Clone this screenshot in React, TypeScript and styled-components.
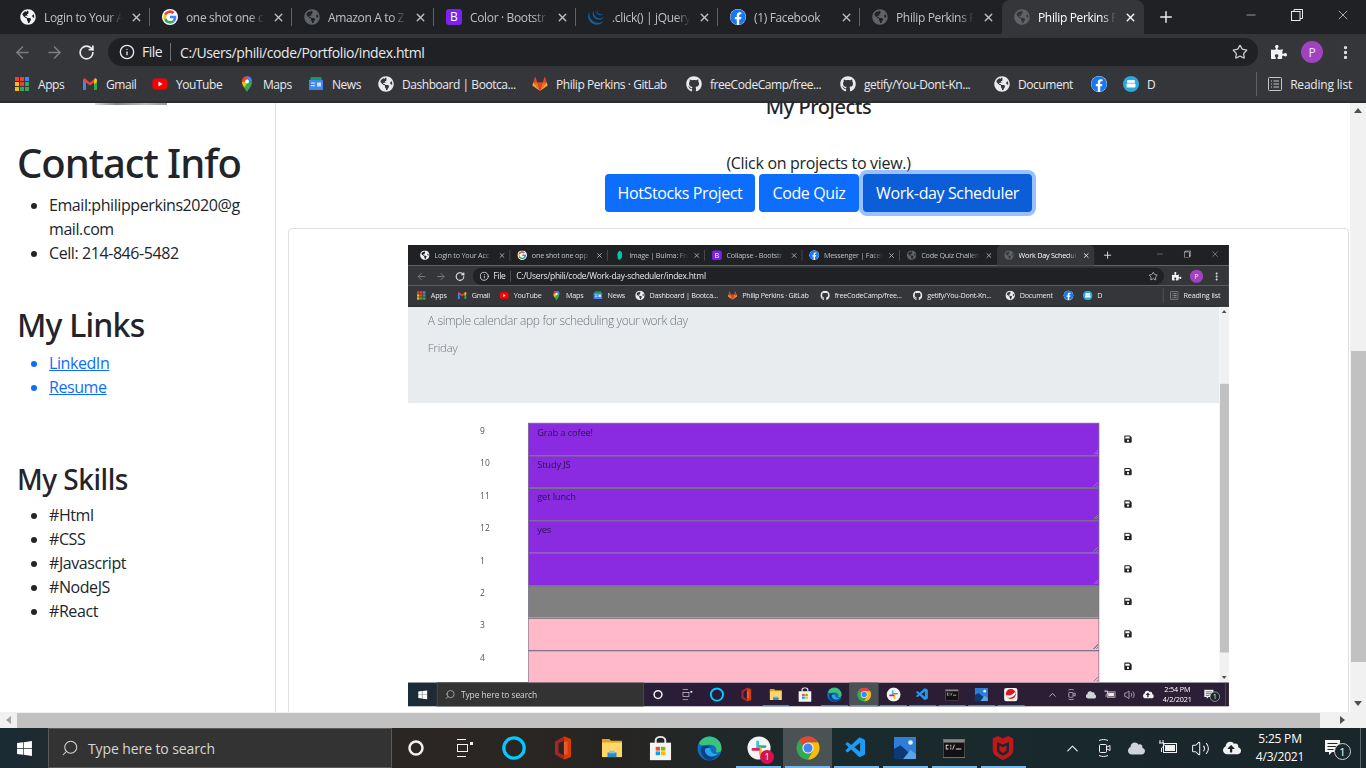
import React from "react";
import styled, { createGlobalStyle } from "styled-components";
import { ArrowLeft, ArrowRight, RotateCw, Info, Star, MoreVertical, Plus, X, Minus, Search, ChevronUp, Volume2 } from "lucide-react";
import { FaGlobeAmericas, FaPuzzlePiece, FaWindows, FaGithub, FaFacebook, FaSave, FaCloud, FaCloudUploadAlt } from "react-icons/fa";
import { SiJquery } from "react-icons/si";
import { VscVscode } from "react-icons/vsc";

const UI = `"Open Sans", "Noto Sans", "Liberation Sans", sans-serif`;
const HEAD = `"Noto Sans", "Open Sans", "Liberation Sans", sans-serif`;

const Global = createGlobalStyle`
  html, body { margin: 0; padding: 0; background: #fff; overflow: hidden; }
  * { box-sizing: border-box; }
`;

const Screen = styled.div`
  width: 1366px;
  height: 768px;
  display: flex;
  flex-direction: column;
  overflow: hidden;
  background: #fff;
  font-family: ${UI};
  color: #212529;
`;

/* ---------- browser chrome ---------- */
const TabStrip = styled.div`
  height: 34px;
  background: #202124;
  display: flex;
  padding-left: 8px;
  flex: none;
`;
const TabBox = styled.div<{ $w: number; $active?: boolean; $sep?: boolean }>`
  width: ${p => p.$w}px;
  height: 34px;
  display: flex;
  align-items: center;
  gap: 8px;
  padding: 0 7px 0 12px;
  position: relative;
  border-radius: 8px 8px 0 0;
  background: ${p => (p.$active ? "#35363a" : "transparent")};
  color: ${p => (p.$active ? "#fff" : "#bdc1c6")};
  &::after {
    content: "";
    display: ${p => (p.$sep ? "block" : "none")};
    position: absolute;
    right: 0;
    top: 8px;
    width: 1px;
    height: 18px;
    background: #5f6368;
  }
`;
const TabTitle = styled.span`
  flex: 1;
  min-width: 0;
  overflow: hidden;
  white-space: nowrap;
  font-size: 12px;
  letter-spacing: -0.35px;
  -webkit-mask-image: linear-gradient(90deg, #000 82%, transparent 100%);
  mask-image: linear-gradient(90deg, #000 82%, transparent 100%);
`;
const NewTab = styled.div`
  width: 44px;
  height: 34px;
  display: flex;
  align-items: center;
  justify-content: center;
  color: #e8eaed;
`;
const WinControls = styled.div`
  margin-left: auto;
  display: flex;
  color: #e8eaed;
`;
const WinBtn = styled.div`
  width: 46px;
  height: 30px;
  display: flex;
  align-items: center;
  justify-content: center;
`;
const Toolbar = styled.div`
  height: 33px;
  background: #35363a;
  display: flex;
  align-items: center;
  flex: none;
  padding: 3px 0 0 6px;
  color: #e8eaed;
`;
const NavBtn = styled.div<{ $dim?: boolean }>`
  width: 32px;
  display: flex;
  justify-content: center;
  color: ${p => (p.$dim ? "#7b7d81" : "#e8eaed")};
`;
const UrlPill = styled.div`
  margin-left: 6px;
  width: 1150px;
  height: 28px;
  border-radius: 14px;
  background: #202124;
  display: flex;
  align-items: center;
  padding: 0 10px 0 11px;
  font-size: 14px;
  letter-spacing: -0.4px;
`;
const FileLabel = styled.span`
  margin-left: 7px;
  width: 29px;
  border-right: 1px solid #6b6e72;
  line-height: 18px;
  font-size: 14px;
  letter-spacing: -0.5px;
`;
const UrlText = styled.span`
  margin-left: 9px;
  flex: 1;
  white-space: nowrap;
`;
const ToolRight = styled.div`
  display: flex;
  align-items: center;
  margin-left: 13px;
  gap: 14px;
`;
const Avatar = styled.div`
  width: 22px;
  height: 22px;
  border-radius: 50%;
  background: #a142c0;
  color: #f3e5f5;
  font-size: 12px;
  display: flex;
  align-items: center;
  justify-content: center;
`;
const BookmarkBar = styled.div`
  height: 36px;
  background: #35363a;
  border-bottom: 2px solid #2b2c2f;
  display: flex;
  align-items: center;
  padding: 0 14px;
  flex: none;
  color: #e8eaed;
  font-size: 12px;
  letter-spacing: -0.45px;
`;
const Mark = styled.div<{ $gap?: number }>`
  display: flex;
  align-items: center;
  gap: 8px;
  margin-right: ${p => p.$gap ?? 17}px;
`;
const MarkLabel = styled.span<{ $w: number }>`
  width: ${p => p.$w}px;
  white-space: nowrap;
`;
const ReadingList = styled.div`
  margin-left: auto;
  height: 24px;
  border-left: 1px solid #5f6368;
  padding-left: 11px;
  display: flex;
  align-items: center;
  gap: 8px;
  letter-spacing: -0.2px;
`;

/* ---------- page frame ---------- */
const PageFrame = styled.div`
  flex: 1;
  min-height: 0;
  display: flex;
  flex-direction: column;
`;
const PageRow = styled.div`
  flex: 1;
  min-height: 0;
  display: flex;
`;
const PageBody = styled.div`
  flex: 1;
  min-width: 0;
  overflow: hidden;
`;
const VBar = styled.div`
  width: 16px;
  flex: none;
  background: #f1f1f1;
  display: flex;
  flex-direction: column;
  align-items: center;
  padding-top: 5px;
`;
const VThumb = styled.div<{ $top: number; $h: number }>`
  width: 15px;
  margin-top: ${p => p.$top}px;
  height: ${p => p.$h}px;
  background: #c1c1c1;
`;
const Arrow = styled.div<{ $dir: "up" | "down" | "left" | "right" }>`
  width: 0;
  height: 0;
  flex: none;
  border: 4px solid transparent;
  ${p => (p.$dir === "up" ? "border-bottom: 5px solid #505050; border-top: 0;" : "")}
  ${p => (p.$dir === "down" ? "border-top: 5px solid #505050; border-bottom: 0;" : "")}
  ${p => (p.$dir === "left" ? "border-right: 5px solid #a3a3a3; border-left: 0;" : "")}
  ${p => (p.$dir === "right" ? "border-left: 5px solid #505050; border-right: 0;" : "")}
`;
const DownWrap = styled.div`
  margin-top: auto;
  padding-bottom: 6px;
`;
const HBar = styled.div`
  height: 16px;
  flex: none;
  background: #f1f1f1;
  display: flex;
  align-items: center;
  padding: 0 21px 0 6px;
`;
const HThumb = styled.div`
  height: 15px;
  width: 1303px;
  margin-left: 6px;
  background: #c1c1c1;
`;
const HEnd = styled.div`
  margin-left: auto;
`;

/* ---------- taskbar ---------- */
const TaskBar = styled.div<{ $bg: string }>`
  height: 40px;
  flex: none;
  display: flex;
  align-items: stretch;
  background: ${p => p.$bg};
  color: #fff;
`;
const Start = styled.div`
  width: 48px;
  display: flex;
  align-items: center;
  justify-content: center;
`;
const SearchBox = styled.div`
  width: 344px;
  background: #333;
  border: 1px solid #5a5a5a;
  display: flex;
  align-items: center;
  padding-left: 12px;
  gap: 9px;
  font-size: 14px;
  letter-spacing: -0.1px;
  color: #d6d6d6;
`;
const TaskCell = styled.div<{ $on?: boolean; $active?: boolean }>`
  width: 48.9px;
  display: flex;
  align-items: center;
  justify-content: center;
  position: relative;
  background: ${p => (p.$active ? "#4a5254" : "transparent")};
  &::after {
    content: "";
    display: ${p => (p.$on ? "block" : "none")};
    position: absolute;
    left: 2px;
    right: 2px;
    bottom: 0;
    height: 2px;
    background: #76b9ed;
  }
`;
const Badge = styled.span`
  position: absolute;
  right: 9px;
  bottom: 4px;
  width: 14px;
  height: 14px;
  border-radius: 50%;
  background: #d5124f;
  color: #fff;
  font-size: 9px;
  line-height: 14px;
  text-align: center;
`;
const Tray = styled.div`
  margin-left: auto;
  display: flex;
  align-items: stretch;
`;
const TrayCell = styled.div`
  width: 32px;
  display: flex;
  align-items: center;
  justify-content: center;
  color: #f0f0f0;
`;
const Clock = styled.div`
  width: 64px;
  display: flex;
  flex-direction: column;
  justify-content: center;
  align-items: center;
  font-size: 12px;
  letter-spacing: -0.2px;
  line-height: 18px;
`;
const Notify = styled.div`
  width: 48px;
  padding-left: 12px;
  display: flex;
  align-items: center;
  position: relative;
`;
const NotifyCount = styled.span`
  position: absolute;
  left: 22px;
  top: 15px;
  width: 17px;
  height: 17px;
  border-radius: 50%;
  border: 1px solid #d0d0d0;
  background: #1b282c;
  font-size: 11px;
  line-height: 15px;
  text-align: center;
`;
const ShowDesktop = styled.div`
  width: 6px;
  border-left: 1px solid #5b666a;
`;

/* ---------- portfolio page ---------- */
const Portfolio = styled.div`
  display: flex;
  height: 100%;
`;
const Side = styled.aside`
  width: 276px;
  flex: none;
  border-right: 1px solid #dee2e6;
  padding-left: 17px;
  font-size: 16px;
  line-height: 24px;
`;
const Sliver = styled.div`
  width: 72px;
  height: 2px;
  margin-left: 78px;
  background: linear-gradient(90deg, #ddd, #888 30%, #bbb 70%, #999);
`;
const H1 = styled.h1`
  margin: 34px 0 0;
  font-family: ${HEAD};
  font-size: 40px;
  line-height: 48px;
  font-weight: 500;
  letter-spacing: -1.05px;
`;
const H2 = styled.h2`
  margin: 41px 0 0;
  font-family: ${HEAD};
  font-size: 32px;
  line-height: 38px;
  font-weight: 500;
  letter-spacing: -0.8px;
`;
const H3 = styled.h3`
  margin: 63px 0 0;
  font-family: ${HEAD};
  font-size: 28px;
  line-height: 34px;
  font-weight: 500;
  letter-spacing: -0.47px;
`;
const List = styled.ul<{ $top: number }>`
  margin: ${p => p.$top}px 0 0;
  padding-left: 32px;
  letter-spacing: -0.42px;
`;
const LinkItem = styled.li`
  color: #0d6efd;
`;
const A = styled.a`
  color: #0d6efd;
  text-decoration: underline;
`;
const Main = styled.main`
  flex: 1;
  min-width: 0;
  padding: 0 1px 0 12px;
  font-size: 16px;
  line-height: 24px;
  text-align: center;
`;
const H5 = styled.h5`
  margin: -8px 0 0;
  font-family: ${HEAD};
  font-size: 20px;
  line-height: 24px;
  font-weight: 500;
  letter-spacing: -0.45px;
`;
const Hint = styled.p`
  margin: 32px 0 0;
  letter-spacing: -0.3px;
`;
const BtnRow = styled.div`
  display: flex;
  justify-content: center;
  gap: 4px;
  margin-top: -1px;
`;
const Btn = styled.button<{ $w: number; $focus?: boolean }>`
  width: ${p => p.$w}px;
  height: 38px;
  border: 0;
  border-radius: 4px;
  padding: 0;
  background: ${p => (p.$focus ? "#0b5ed7" : "#0d6efd")};
  box-shadow: ${p => (p.$focus ? "0 0 0 4px rgba(49,132,253,.5)" : "none")};
  color: #fff;
  font: 16px/24px ${UI};
  letter-spacing: -0.38px;
`;
const Card = styled.div`
  margin-top: 16px;
  border: 1px solid rgba(0, 0, 0, 0.125);
  border-radius: 4px;
  padding: 16px 0 40px;
  display: flex;
  justify-content: center;
`;
const Shot = styled.div`
  width: 821px;
  height: 462px;
  overflow: hidden;
  flex: none;
  filter: blur(0.35px);
  text-align: left;
`;
const ShotScale = styled.div`
  width: 1366px;
  height: 768px;
  transform: scale(0.601);
  transform-origin: 0 0;
`;

/* ---------- scheduler page inside the picture ---------- */
const Jumbo = styled.div`
  height: 160px;
  background: #e9ecef;
  padding: 8px 33px 0;
  color: #6f767c;
  font-size: 20px;
  font-weight: 300;
  letter-spacing: -0.3px;
`;
const Lead = styled.p`
  margin: 0;
  line-height: 30px;
  letter-spacing: -0.6px;
`;
const Day = styled.p`
  margin: 16px 0 0;
  font-size: 19px;
  line-height: 28px;
`;
const Rows = styled.div`
  padding-top: 33px;
`;
const Row = styled.div`
  display: flex;
  height: 54px;
`;
const Hour = styled.div`
  width: 200px;
  padding: 1px 0 0 120px;
  font-size: 14px;
  line-height: 24px;
  color: #555;
`;
const Slot = styled.div<{ $bg: string }>`
  width: 950px;
  background: ${p => p.$bg};
  border: 1px solid #77707f;
  border-top-width: 2px;
  border-bottom: 0;
  padding: 1px 14px 0;
  font-size: 15.5px;
  line-height: 24px;
  letter-spacing: -0.25px;
  color: #2a1745;
  position: relative;
  &::after {
    content: "";
    position: absolute;
    right: 1px;
    bottom: 2px;
    width: 9px;
    height: 9px;
    background: linear-gradient(135deg, transparent 55%, #8c7fa0 55%, #8c7fa0 65%, transparent 65%, transparent 80%, #8c7fa0 80%, #8c7fa0 90%, transparent 90%);
  }
`;
const SaveCell = styled.div`
  width: 96px;
  display: flex;
  align-items: center;
  justify-content: center;
  color: #212529;
`;

/* ---------- icons ---------- */
const TileB = styled.span`
  width: 16px;
  height: 16px;
  border-radius: 3px;
  background: #7b22ee;
  color: #fff;
  font-size: 12px;
  font-weight: 500;
  line-height: 16px;
  text-align: center;
  flex: none;
  letter-spacing: 0;
`;
const FbDisc = styled.span`
  width: 16px;
  height: 16px;
  border-radius: 50%;
  background: #fff;
  display: flex;
  flex: none;
  color: #1877f2;
`;

const Google = () => (
  <svg width="16" height="16" viewBox="0 0 48 48">
    <circle cx="24" cy="24" r="24" fill="#fff" />
    <path fill="#ea4335" d="M24 12c3 0 5.600 1 7.700 3l5.700-5.700A20 20 0 0 0 6.200 14.900l6.700 5.200C14.400 15.400 18.800 12 24 12z" />
    <path fill="#4285f4" d="M43 24.400c0-1.400-.1-2.500-.4-3.900H24v7.600h10.800c-.5 2.500-1.900 4.700-4.200 6.200l6.500 5C40.900 35.800 43 30.600 43 24.400z" />
    <path fill="#fbbc05" d="M12.900 28.100a11.800 11.800 0 0 1 0-8l-6.700-5.200a20 20 0 0 0 0 18.200z" />
    <path fill="#34a853" d="M24 44c5.400 0 9.900-1.800 13.100-4.700l-6.500-5c-1.800 1.200-4 2-6.600 2-5.200 0-9.600-3.500-11.100-8.200l-6.700 5.200A20 20 0 0 0 24 44z" />
  </svg>
);
const Gmail = () => (
  <svg width="16" height="16" viewBox="0 0 16 16">
    <path fill="#4285f4" d="M1 3.500h3V14H2a1 1 0 0 1-1-1z" />
    <path fill="#34a853" d="M12 3.500h3V13a1 1 0 0 1-1 1h-2z" />
    <path fill="#ea4335" d="M1 3.500 2.500 2 8 6.500 13.500 2 15 3.500 12 6.500 8 9.500 4 6.500z" />
    <path fill="#fbbc05" d="M12 3.800 13.500 2 15 3.500V6l-3 2.500z" />
  </svg>
);
const YouTube = () => (
  <svg width="16" height="16" viewBox="0 0 16 16">
    <rect x="0.500" y="2.500" width="15" height="11" rx="3" fill="#f00" />
    <path d="M6.500 5.500v5l4-2.500z" fill="#fff" />
  </svg>
);
const Maps = () => (
  <svg width="16" height="16" viewBox="0 0 16 16">
    <path fill="#34a853" d="M8 16C6 12.500 3 10 3 5.500h10C13 10 10 12.500 8 16z" />
    <path fill="#fbbc05" d="M3 5.500C3 8 4.500 10 5.500 11.500l3-6z" />
    <path fill="#4285f4" d="M8 0a5 5 0 0 1 5 5.500H8z" />
    <path fill="#ea4335" d="M8 0a5 5 0 0 0-5 5.500h5z" />
    <circle cx="8" cy="5.500" r="2" fill="#fff" />
  </svg>
);
const News = () => (
  <svg width="16" height="16" viewBox="0 0 16 16">
    <path fill="#0f9d58" d="M3 1h10l1 3H2z" />
    <path fill="#f4b400" d="M1 4h5v3H1z" />
    <rect x="1" y="4" width="14" height="10" rx="1" fill="#4285f4" />
    <rect x="3" y="6.500" width="4" height="1.200" fill="#d2e3fc" />
    <rect x="3" y="9" width="4" height="1.200" fill="#d2e3fc" />
    <rect x="9" y="6.500" width="4" height="4" fill="#d2e3fc" />
  </svg>
);
const GitLab = () => (
  <svg width="16" height="16" viewBox="0 0 16 16">
    <path fill="#e24329" d="M8 15 5.200 6.300h5.600z" />
    <path fill="#fc6d26" d="M8 15 5.200 6.300H1.300zM8 15l2.800-8.700h3.900z" />
    <path fill="#fca326" d="M1.300 6.300.4 9.100c-.1.300 0 .5.200.7L8 15zM14.700 6.300l.9 2.800c.1.300 0 .5-.2.7L8 15z" />
    <path fill="#e24329" d="M1.300 6.300h3.900L3.500 1.100c-.1-.2-.4-.2-.5 0zM14.700 6.300h-3.900l1.700-5.200c.1-.2.400-.2.5 0z" />
  </svg>
);
const AppsGrid = () => (
  <svg width="16" height="16" viewBox="0 0 16 16">
    {[
      "#ea4335", "#ea4335", "#4285f4",
      "#fbbc05", "#ea4335", "#34a853",
      "#fbbc05", "#34a853", "#34a853",
    ].map((c, i) => (
      <rect key={i} x={1 + (i % 3) * 5} y={1 + Math.floor(i / 3) * 5} width="4" height="4" fill={c} />
    ))}
  </svg>
);
const DIcon = () => (
  <svg width="16" height="16" viewBox="0 0 16 16">
    <circle cx="8" cy="8" r="8" fill="#29a9e0" />
    <rect x="4" y="4" width="8" height="3" rx="1" fill="#e8f7fd" />
    <rect x="3.500" y="7.500" width="9" height="4" rx="1" fill="#fff" />
  </svg>
);
const ReadIcon = () => (
  <svg width="14" height="14" viewBox="0 0 14 14" fill="none" stroke="#c4c7c9">
    <rect x="0.500" y="0.500" width="13" height="13" rx="1" />
    <path d="M3 4h1M3 7h1M3 10h1M5.500 4H11M5.500 7H11M5.500 10H11" />
  </svg>
);
const Restore = () => (
  <svg width="12" height="12" viewBox="0 0 12 12" fill="none" stroke="#e8eaed">
    <rect x="0.500" y="2.500" width="8.500" height="9" />
    <path d="M3 2.500V.5h8.500v9H9" />
  </svg>
);
const Alexa = () => (
  <svg width="24" height="24" viewBox="0 0 24 24">
    <circle cx="12" cy="12" r="10.200" fill="none" stroke="#00caff" strokeWidth="3.200" />
  </svg>
);
const Office = () => (
  <svg width="18" height="24" viewBox="0 0 20 26">
    <path fill="#d83b01" d="M11 0l8 3v20l-8 3z" />
    <path fill="#a4262c" d="M1 6l10-6v5L5 8v10l6 3v5L1 20z" />
    <path fill="#eb5a2f" d="M11 6h4v14h-4z" />
  </svg>
);
const Folder = () => (
  <svg width="22" height="20" viewBox="0 0 24 22">
    <path fill="#e0a526" d="M1 1h8l2 2h12v4H1z" />
    <path fill="#ffd766" d="M1 5h22v16H1z" />
    <path fill="#2f88c9" d="M7 16h10v5H7z" />
    <path fill="#7fc4ee" d="M9 14h6v3H9z" />
  </svg>
);
const Store = () => (
  <svg width="23" height="25" viewBox="0 0 24 30" preserveAspectRatio="none">
    <path d="M7 9V5a5 4 0 0 1 10 0v4" fill="none" stroke="#ececec" strokeWidth="2" />
    <path fill="#f4f4f4" d="M1 8h22v21H1z" />
    <rect x="7" y="13" width="4.500" height="4.500" fill="#f25022" />
    <rect x="12.500" y="13" width="4.500" height="4.500" fill="#7fba00" />
    <rect x="7" y="18.500" width="4.500" height="4.500" fill="#00a4ef" />
    <rect x="12.500" y="18.500" width="4.500" height="4.500" fill="#ffb900" />
  </svg>
);
const Edge = () => (
  <svg width="25" height="25" viewBox="0 0 26 26">
    <circle cx="13" cy="13" r="12.500" fill="#0c6fc0" />
    <path fill="#39c47c" d="M13 .5A12.500 12.500 0 0 1 25.500 13c0 3-3 5-6 4 2-3 0-8-6-8-5 0-9 2-11.500-1A12.500 12.500 0 0 1 13 .5z" />
    <path fill="#0a3f8a" d="M4 12c3-3 10-3 10 1 0 4 4 7 9 5-2 4-6 7-10 7-6 0-10-7-9-13z" />
    <path fill="#28a7e7" d="M9 13c2-1 5-1 5 0 0 4 4 7 9 5-3 3-7 4-10 3-4-2-6-6-4-8z" />
  </svg>
);
const Slack = () => (
  <svg width="24" height="24" viewBox="0 0 26 26">
    <circle cx="13" cy="13" r="12.500" fill="#f4f4f4" />
    <rect x="10" y="5" width="3" height="9" rx="1.500" fill="#36c5f0" />
    <rect x="12" y="10" width="9" height="3" rx="1.500" fill="#2eb67d" />
    <rect x="13" y="12" width="3" height="9" rx="1.500" fill="#ecb22e" />
    <rect x="5" y="13" width="9" height="3" rx="1.500" fill="#e01e5a" />
  </svg>
);
const ChromeLogo = () => (
  <svg width="24" height="24" viewBox="0 0 24 24">
    <circle cx="12" cy="12" r="11.500" fill="#34a853" />
    <path fill="#fbbc05" d="M12 23.500A11.500 11.500 0 0 0 22 6.300H12l5 8.700z" />
    <path fill="#ea4335" d="M12 .5a11.500 11.500 0 0 1 10 5.800H12a5.700 5.700 0 0 0-5 3L3 4.300A11.500 11.500 0 0 1 12 .5z" />
    <circle cx="12" cy="12" r="5.600" fill="#f2f2f2" />
    <circle cx="12" cy="12" r="4.500" fill="#4285f4" />
  </svg>
);
const Photos = () => (
  <svg width="22" height="22" viewBox="0 0 24 24">
    <rect width="24" height="24" fill="#2f7fd6" />
    <path fill="#0a3a78" d="M0 24V13l7-4 9 8 8 3v4z" />
    <path fill="#5aa4ea" d="M10 24l8-10 6 5v5z" />
    <circle cx="18" cy="6" r="2.500" fill="#e6f3ff" />
  </svg>
);
const Cmd = () => (
  <svg width="22" height="19" viewBox="0 0 24 20">
    <rect width="24" height="20" fill="#111" stroke="#888" />
    <rect x="0.500" y="0.500" width="23" height="3" fill="#888" />
    <path d="M3 6h3v1H4v3h2v1H3zM8 6h1v2H8zM8 9h1v2H8zM10 11l2-5h1l-2 5zM14 10h6v1.200h-6z" fill="#ddd" />
  </svg>
);
const McAfee = () => (
  <svg width="22" height="24" viewBox="0 0 24 28">
    <path fill="#c01818" d="M0 3l6-3 6 3 6-3 6 3v14c0 5-7 9-12 11C7 26 0 22 0 17z" />
    <path fill="#1b282c" d="M5 7l7 3 7-3v10c0 2-4 5-7 6-3-1-7-4-7-6z" />
    <path fill="#c01818" d="M8 11l4 2 4-2v6l-4 3-4-3z" />
  </svg>
);
const Trend = () => (
  <svg width="24" height="24" viewBox="0 0 26 26">
    <rect x="1" y="1" width="24" height="24" rx="4" fill="#f3f3f3" />
    <circle cx="13" cy="12" r="9" fill="#d71920" />
    <path d="M5 14c6 2 12-1 15-5l2 1c-2 6-10 11-17 8z" fill="#fff" />
  </svg>
);
const Meet = () => (
  <svg width="16" height="20" viewBox="0 0 16 20" fill="none" stroke="#f0f0f0">
    <rect x="3.500" y="6.500" width="7" height="8" rx="1" />
    <path d="M11 9l3-1.500v5L11 11M3 2.500c3-1.300 6-1.300 9 0M3 17.500c3 1.300 6 1.300 9 0" />
  </svg>
);
const Battery = () => (
  <svg width="20" height="18" viewBox="0 0 20 18" fill="none" stroke="#f0f0f0">
    <rect x="5.500" y="4.500" width="13" height="9" />
    <rect x="7.500" y="6.500" width="9" height="5" fill="#f0f0f0" />
    <path d="M2 1v3M5 1v3M1 4h5v3L3.500 9V13" />
  </svg>
);
const NotifyIcon = () => (
  <svg width="18" height="18" viewBox="0 0 18 18">
    <path fill="#f5f5f5" d="M1 1h15v12H8l-3 3v-3H1z" />
    <path stroke="#1b282c" d="M3.500 4.500h10M3.500 7.500h10M3.500 10.500h6" />
  </svg>
);
const Sprout = () => (
  <svg width="16" height="16" viewBox="0 0 16 16">
    <path fill="#00c4a7" d="M8 0c4 2 5 5 4 8 1 3-1 6-5 8-2-2-3-4-2-6-2-3 0-7 3-10z" />
  </svg>
);

type Fav = "globe" | "greyGlobe" | "google" | "boot" | "jquery" | "fb" | "sprout";
const FavIcon = ({ kind }: { kind: Fav }) => {
  switch (kind) {
    case "globe": return <FaGlobeAmericas size={16} color="#f1f3f4" />;
    case "greyGlobe": return <FaGlobeAmericas size={16} color="#5f6368" />;
    case "google": return <Google />;
    case "boot": return <TileB>B</TileB>;
    case "jquery": return <SiJquery size={16} color="#0f5f9e" />;
    case "fb": return <FbDisc><FaFacebook size={16} /></FbDisc>;
    default: return <Sprout />;
  }
};

type TabDef = { t: string; i: Fav };
const Tabs = ({ tabs, w }: { tabs: TabDef[]; w: number }) => (
  <TabStrip>
    {tabs.map((tab, n) => (
      <TabBox key={n} $w={w} $active={n === tabs.length - 1} $sep={n < tabs.length - 2}>
        <FavIcon kind={tab.i} />
        <TabTitle>{tab.t}</TabTitle>
        <X size={13} strokeWidth={2.5} />
      </TabBox>
    ))}
    <NewTab><Plus size={18} /></NewTab>
    <WinControls>
      <WinBtn><Minus size={14} strokeWidth={1} /></WinBtn>
      <WinBtn><Restore /></WinBtn>
      <WinBtn><X size={16} strokeWidth={1} /></WinBtn>
    </WinControls>
  </TabStrip>
);

const BrowserChrome = ({ tabs, w, url }: { tabs: TabDef[]; w: number; url: string }) => (
  <>
    <Tabs tabs={tabs} w={w} />
    <Toolbar>
      <NavBtn $dim><ArrowLeft size={19} /></NavBtn>
      <NavBtn $dim><ArrowRight size={19} /></NavBtn>
      <NavBtn><RotateCw size={17} strokeWidth={2.4} /></NavBtn>
      <UrlPill>
        <Info size={16} />
        <FileLabel>File</FileLabel>
        <UrlText>{url}</UrlText>
        <Star size={16} color="#c4c7c9" />
      </UrlPill>
      <ToolRight>
        <FaPuzzlePiece size={16} color="#f1f3f4" />
        <Avatar>P</Avatar>
        <MoreVertical size={17} strokeWidth={2.6} />
      </ToolRight>
    </Toolbar>
    <BookmarkBar>
      <Mark><AppsGrid /><MarkLabel $w={27}>Apps</MarkLabel></Mark>
      <Mark><Gmail /><MarkLabel $w={29}>Gmail</MarkLabel></Mark>
      <Mark><YouTube /><MarkLabel $w={46}>YouTube</MarkLabel></Mark>
      <Mark><Maps /><MarkLabel $w={28}>Maps</MarkLabel></Mark>
      <Mark><News /><MarkLabel $w={29}>News</MarkLabel></Mark>
      <Mark><FaGlobeAmericas size={16} /><MarkLabel $w={113}>Dashboard | Bootca...</MarkLabel></Mark>
      <Mark><GitLab /><MarkLabel $w={113}>Philip Perkins · GitLab</MarkLabel></Mark>
      <Mark><FaGithub size={16} /><MarkLabel $w={113}>freeCodeCamp/free...</MarkLabel></Mark>
      <Mark><FaGithub size={16} /><MarkLabel $w={113}>getify/You-Dont-Kn...</MarkLabel></Mark>
      <Mark><FaGlobeAmericas size={16} /><MarkLabel $w={56}>Document</MarkLabel></Mark>
      <Mark $gap={16}><FbDisc><FaFacebook size={16} /></FbDisc></Mark>
      <Mark><DIcon /><MarkLabel $w={8}>D</MarkLabel></Mark>
      <ReadingList><ReadIcon /><span>Reading list</span></ReadingList>
    </BookmarkBar>
  </>
);

const Taskbar = ({ bg, apps, time, date }: { bg: string; apps: React.ReactNode; time: string; date: string }) => (
  <TaskBar $bg={bg}>
    <Start><FaWindows size={17} /></Start>
    <SearchBox>
      <Search size={18} strokeWidth={1.4} style={{ transform: "scaleX(-1)" }} />
      <span>Type here to search</span>
    </SearchBox>
    <TaskCell>
      <svg width="18" height="18" viewBox="0 0 18 18"><circle cx="9" cy="9" r="6.500" fill="none" stroke="#f0f0f0" strokeWidth="2.500" /></svg>
    </TaskCell>
    <TaskCell>
      <svg width="18" height="20" viewBox="0 0 18 20" fill="none" stroke="#f0f0f0"><path d="M1 1.500h9M1 18.500h9" /><rect x="1.500" y="6.500" width="10" height="7" /><rect x="14" y="4" width="3" height="3" fill="#f0f0f0" stroke="none" /></svg>
    </TaskCell>
    <TaskCell><Alexa /></TaskCell>
    <TaskCell><Office /></TaskCell>
    {apps}
    <Tray>
      <TrayCell><ChevronUp size={19} strokeWidth={1.4} /></TrayCell>
      <TrayCell><Meet /></TrayCell>
      <TrayCell><FaCloud size={17} color="#cfd4d6" /></TrayCell>
      <TrayCell><Battery /></TrayCell>
      <TrayCell><Volume2 size={19} strokeWidth={1.3} /></TrayCell>
      <TrayCell><FaCloudUploadAlt size={18} /></TrayCell>
      <Clock><span>{time}</span><span>{date}</span></Clock>
      <Notify><NotifyIcon /><NotifyCount>1</NotifyCount></Notify>
      <ShowDesktop />
    </Tray>
  </TaskBar>
);

const outerTabs: TabDef[] = [
  { t: "Login to Your A", i: "globe" },
  { t: "one shot one c", i: "google" },
  { t: "Amazon A to Z", i: "greyGlobe" },
  { t: "Color · Bootstr", i: "boot" },
  { t: ".click() | jQuery", i: "jquery" },
  { t: "(1) Facebook", i: "fb" },
  { t: "Philip Perkins F", i: "greyGlobe" },
  { t: "Philip Perkins F", i: "greyGlobe" },
];
const innerTabs: TabDef[] = [
  { t: "Login to Your Acc", i: "globe" },
  { t: "one shot one opp", i: "google" },
  { t: "Image | Bulma: Fre", i: "sprout" },
  { t: "Collapse - Bootstr", i: "boot" },
  { t: "Messenger | Faceb", i: "fb" },
  { t: "Code Quiz Challen", i: "greyGlobe" },
  { t: "Work Day Schedul", i: "greyGlobe" },
];

const slots: { h: string; bg: string; text: string }[] = [
  { h: "9", bg: "#8a2be2", text: "Grab a cofee!" },
  { h: "10", bg: "#8a2be2", text: "Study JS" },
  { h: "11", bg: "#8a2be2", text: "get lunch" },
  { h: "12", bg: "#8a2be2", text: "yes" },
  { h: "1", bg: "#8a2be2", text: "" },
  { h: "2", bg: "#808080", text: "" },
  { h: "3", bg: "#ffb9c8", text: "" },
  { h: "4", bg: "#ffb9c8", text: "" },
];

const Scheduler = () => (
  <>
    <Jumbo>
      <Lead>A simple calendar app for scheduling your work day</Lead>
      <Day>Friday</Day>
    </Jumbo>
    <Rows>
      {slots.map(s => (
        <Row key={s.h}>
          <Hour>{s.h}</Hour>
          <Slot $bg={s.bg}>{s.text}</Slot>
          <SaveCell><FaSave size={14} /></SaveCell>
        </Row>
      ))}
    </Rows>
  </>
);

const outerBar = "linear-gradient(90deg,#1a2a33 0,#1f2a30 48px,#2b2623 30%,#272523 45%,#1a2a2d 62%,#19262a 100%)";
const innerBar = "linear-gradient(90deg,#1a2c3a 0,#1f2a35 48px,#2a1c38 35%,#2c1d35 60%,#2a2036 100%)";

export default function App() {
  return (
    <Screen>
      <Global />
      <BrowserChrome tabs={outerTabs} w={142} url="C:/Users/phili/code/Portfolio/index.html" />
      <PageFrame>
        <PageRow>
          <PageBody>
            <Portfolio>
              <Side>
                <Sliver />
                <H1>Contact Info</H1>
                <List $top={6}>
                  <li>Email:philipperkins2020@g<br />mail.com</li>
                  <li>Cell: 214-846-5482</li>
                </List>
                <H2>My Links</H2>
                <List $top={7}>
                  <LinkItem><A>LinkedIn</A></LinkItem>
                  <LinkItem><A>Resume</A></LinkItem>
                </List>
                <H3>My Skills</H3>
                <List $top={7}>
                  <li>#Html</li>
                  <li>#CSS</li>
                  <li>#Javascript</li>
                  <li>#NodeJS</li>
                  <li>#React</li>
                </List>
              </Side>
              <Main>
                <H5>My Projects</H5>
                <Hint>(Click on projects to view.)</Hint>
                <BtnRow>
                  <Btn $w={150}>HotStocks Project</Btn>
                  <Btn $w={100}>Code Quiz</Btn>
                  <Btn $w={169} $focus>Work-day Scheduler</Btn>
                </BtnRow>
                <Card>
                  <Shot>
                    <ShotScale>
                      <Screen>
                        <BrowserChrome tabs={innerTabs} w={162} url="C:/Users/phili/code/Work-day-scheduler/index.html" />
                        <PageFrame>
                          <PageRow>
                            <PageBody><Scheduler /></PageBody>
                            <VBar>
                              <Arrow $dir="up" />
                              <VThumb $top={118} $h={447} />
                              <DownWrap><Arrow $dir="down" /></DownWrap>
                            </VBar>
                          </PageRow>
                        </PageFrame>
                        <Taskbar
                          bg={innerBar}
                          time="2:54 PM"
                          date="4/2/2021"
                          apps={
                            <>
                              <TaskCell $on><Folder /></TaskCell>
                              <TaskCell><Store /></TaskCell>
                              <TaskCell $on><Edge /></TaskCell>
                              <TaskCell $on $active><ChromeLogo /></TaskCell>
                              <TaskCell $on><Slack /></TaskCell>
                              <TaskCell $on><VscVscode size={24} color="#1e9bf0" /></TaskCell>
                              <TaskCell $on><Cmd /></TaskCell>
                              <TaskCell $on><Photos /></TaskCell>
                              <TaskCell $on><Trend /></TaskCell>
                            </>
                          }
                        />
                      </Screen>
                    </ShotScale>
                  </Shot>
                </Card>
              </Main>
            </Portfolio>
          </PageBody>
          <VBar>
            <Arrow $dir="up" />
            <VThumb $top={238} $h={311} />
            <DownWrap><Arrow $dir="down" /></DownWrap>
          </VBar>
        </PageRow>
        <HBar>
          <Arrow $dir="left" />
          <HThumb />
          <HEnd><Arrow $dir="right" /></HEnd>
        </HBar>
      </PageFrame>
      <Taskbar
        bg={outerBar}
        time="5:25 PM"
        date="4/3/2021"
        apps={
          <>
            <TaskCell><Folder /></TaskCell>
            <TaskCell><Store /></TaskCell>
            <TaskCell><Edge /></TaskCell>
            <TaskCell $on><Slack /><Badge>1</Badge></TaskCell>
            <TaskCell $on $active><ChromeLogo /></TaskCell>
            <TaskCell $on><VscVscode size={24} color="#1e9bf0" /></TaskCell>
            <TaskCell $on><Photos /></TaskCell>
            <TaskCell $on><Cmd /></TaskCell>
            <TaskCell $on><McAfee /></TaskCell>
          </>
        }
      />
    </Screen>
  );
}
